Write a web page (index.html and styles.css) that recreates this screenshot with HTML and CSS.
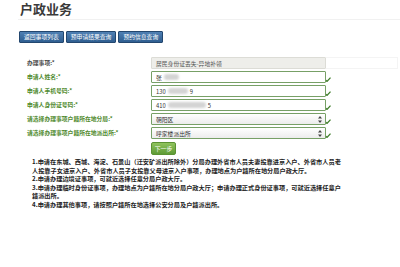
FILE: index.html
```html
<!DOCTYPE html>
<html lang="zh-CN">

<head>
    <meta charset="UTF-8">
    <meta name="viewport" content="width=device-width, initial-scale=1.0">
    <title>户政业务</title>
    <link rel="stylesheet" href="styles.css">
</head>

<body>

    <div class="page">

        <h1 class="title">户政业务</h1>

        <div class="toolbar">
            <button type="button" class="btn-blue">返回事项列表</button>
            <button type="button" class="btn-blue">预申请结果查询</button>
            <button type="button" class="btn-blue">预约信息查询</button>
        </div>

        <form class="apply-form" action="#" method="get">

            <label class="field-label plain">办理事项:*</label>
            <div class="field disabled">居民身份证丢失-异地补领</div>
            <div class="hint-box"></div>

            <label class="field-label">申请人姓名:*</label>
            <div class="field">张<span class="blur" style="width: 15px"></span></div>
            <div class="ok"><svg width="6" height="5" viewBox="0 0 6 5"><path d="M0.5 3 L2 4.4 L5.5 0.6" fill="none" stroke="#3f7d2a" stroke-width="1.3"/></svg></div>

            <label class="field-label">申请人手机号码:*</label>
            <div class="field">130<span class="blur" style="width: 20px"></span>9</div>
            <div class="ok"><svg width="6" height="5" viewBox="0 0 6 5"><path d="M0.5 3 L2 4.4 L5.5 0.6" fill="none" stroke="#3f7d2a" stroke-width="1.3"/></svg></div>

            <label class="field-label">申请人身份证号码:*</label>
            <div class="field">410<span class="blur" style="width: 38px"></span>5</div>
            <div class="ok"><svg width="6" height="5" viewBox="0 0 6 5"><path d="M0.5 3 L2 4.4 L5.5 0.6" fill="none" stroke="#3f7d2a" stroke-width="1.3"/></svg></div>

            <label class="field-label">请选择办理事项户籍所在地分局:*</label>
            <div class="field select">朝阳区
                <svg class="arrows" width="4" height="7" viewBox="0 0 4 7"><path d="M2 0 L4 2.6 L0 2.6 Z M2 7 L4 4.4 L0 4.4 Z" fill="#444"/></svg>
            </div>
            <div class="ok"><svg width="6" height="5" viewBox="0 0 6 5"><path d="M0.5 3 L2 4.4 L5.5 0.6" fill="none" stroke="#3f7d2a" stroke-width="1.3"/></svg></div>

            <label class="field-label">请选择办理事项户籍所在地派出所:*</label>
            <div class="field select">呼家楼派出所
                <svg class="arrows" width="4" height="7" viewBox="0 0 4 7"><path d="M2 0 L4 2.6 L0 2.6 Z M2 7 L4 4.4 L0 4.4 Z" fill="#444"/></svg>
            </div>
            <div class="ok"><svg width="6" height="5" viewBox="0 0 6 5"><path d="M0.5 3 L2 4.4 L5.5 0.6" fill="none" stroke="#3f7d2a" stroke-width="1.3"/></svg></div>

            <div></div>
            <div class="actions"><button type="submit" class="btn-green">下一步</button></div>
            <div></div>

        </form>

        <div class="notes">
            <p>1.申请在东城、西城、海淀、石景山（迁安矿派出所除外）分局办理外省市人员夫妻投靠进京入户、外省市人员老<br>人投靠子女进京入户、外省市人员子女投靠父母进京入户事项，办理地点为户籍所在地分局户政大厅。</p>
            <p>2.申请办理边境证事项，可就近选择任意分局户政大厅。</p>
            <p>3.申请办理临时身份证事项，办理地点为户籍所在地分局户政大厅；申请办理正式身份证事项，可就近选择任意户<br>籍派出所。</p>
            <p>4.申请办理其他事项，请按照户籍所在地选择公安分局及户籍派出所。</p>
        </div>

    </div>

</body>

</html>
```

FILE: styles.css
```css
body {
    margin: 0;
    background: #ffffff;
    color: #333333;
    font-family: "Noto Sans CJK SC", "Noto Sans", sans-serif;
}

.page {
    padding-left: 18px;
}

.title {
    margin: 0;
    padding: 1px 0 3px 2px;
    font-size: 13px;
    line-height: 15px;
    font-weight: bold;
    color: #3a3a3a;
    border-bottom: 1px solid #f1f1f1;
}

.toolbar {
    display: flex;
    gap: 2px;
    margin-top: 11px;
    padding-left: 1px;
}

.btn-blue {
    height: 12px;
    padding: 0 4px;
    border: 1px solid #23476f;
    border-radius: 1px;
    background: linear-gradient(#4f80b4, #2f5e90);
    color: #ffffff;
    font-family: inherit;
    font-size: 5.8px;
    line-height: 10px;
    cursor: pointer;
}

.apply-form {
    display: grid;
    grid-template-columns: 124px 175px 72px;
    grid-auto-rows: 12px;
    row-gap: 2px;
    margin-top: 14px;
    margin-left: 9px;
}

.field-label {
    font-size: 5.8px;
    line-height: 12px;
    font-weight: bold;
    color: #4f8a2e;
}

.field-label.plain {
    color: #4a4a4a;
}

.field {
    display: flex;
    align-items: center;
    position: relative;
    padding-left: 4px;
    border: 1px solid #77a066;
    border-radius: 1px;
    background: #ffffff;
    font-size: 5.8px;
    color: #333333;
    box-sizing: border-box;
}

.field.disabled {
    border-color: #dcdcd6;
    background: #eeeeea;
    color: #555555;
}

.field.select {
    background: linear-gradient(#ffffff, #ececec);
}

.arrows {
    position: absolute;
    right: 3px;
    top: 2px;
}

.blur {
    display: inline-block;
    height: 6px;
    margin: 0 2px;
    border-radius: 3px;
    background: #d4d4d4;
    filter: blur(1px);
}

.hint-box {
    border: 1px solid #f4f4f4;
    border-left: none;
}

.ok {
    display: flex;
    align-items: flex-end;
    margin-left: -1px;
    padding-bottom: 1px;
}

.actions {
    display: flex;
    align-items: flex-start;
    padding-top: 1px;
}

.btn-green {
    display: block;
    width: 25px;
    height: 13px;
    padding: 0;
    border: 1px solid #5b9233;
    border-radius: 2px;
    background: linear-gradient(#8fc35d, #5e9b35);
    color: #ffffff;
    font-family: inherit;
    font-size: 5.8px;
    line-height: 11px;
    cursor: pointer;
}

.notes {
    margin-top: 5px;
    margin-left: 14px;
    font-size: 6.2px;
    line-height: 8.6px;
    font-weight: bold;
    color: #222222;
}

.notes p {
    margin: 0;
    white-space: nowrap;
}
```
